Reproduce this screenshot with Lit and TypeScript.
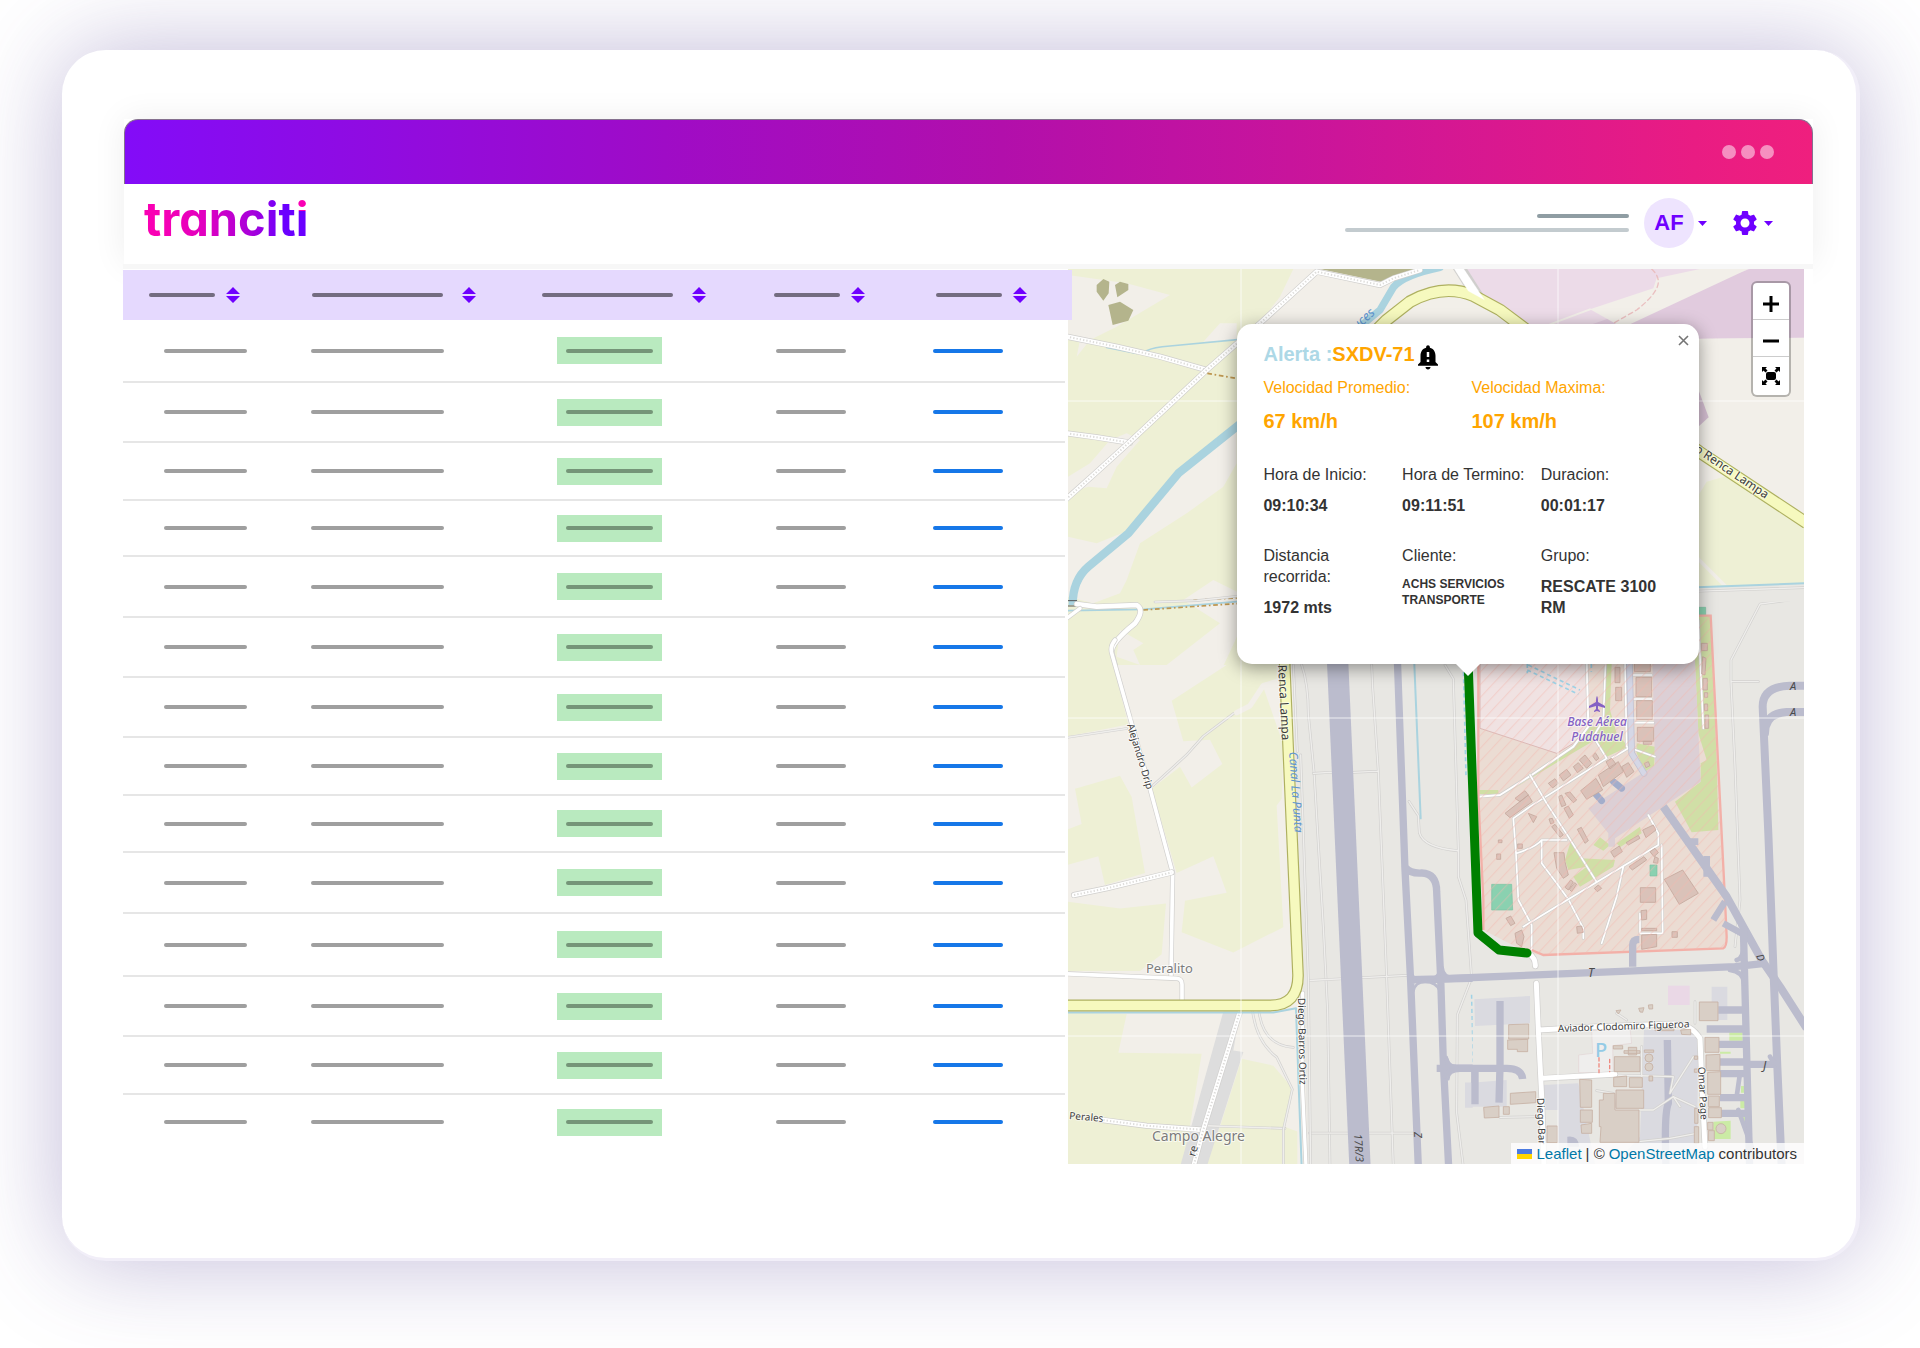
import { LitElement, html, css, svg } from "lit";
import { customElement } from "lit/decorators.js";

/* Height of each body row of the trips table. */
const ROWS = [62, 60, 58, 56, 61, 60, 60, 58, 57, 61, 63, 60, 58, 55];
const COLUMNS = ["a", "b", "c", "d", "e"];

const label = (x: number, y: number, angle: number, size: number, text: string, cls = "road") =>
  svg`<text class=${cls} x=${x} y=${y} font-size=${size} transform="rotate(${angle} ${x} ${y})">${text}</text>`;

/* Draws the street map: regional groups, then grid, route and labels. */
@customElement("street-map")
export class StreetMap extends LitElement {
  static styles = css`
    :host { display: block; position: absolute; inset: 0; overflow: hidden; background: #f2efe9; }
    svg { display: block; width: 100%; height: 100%; }
    .line { fill: none; stroke-linejoin: round; stroke-linecap: round; }
    .butt { stroke-linecap: butt; }
    .field { fill: #eef0d5; }
    .bare { fill: #f2efe9; }
    .olive { fill: #b4b48c; }
    .river { stroke: #aad3df; }
    .ground { fill: #e8e7e3; }
    .case { stroke: #d0cfcd; }
    .street { stroke: #ffffff; }
    .track { stroke: #dddcda; stroke-dasharray: 4 6; }
    .thin { stroke: #d2d1cf; stroke-width: 8; }
    .thinfill { stroke: #efeeec; stroke-width: 4; }
    .main { stroke: #aeb060; }
    .mainfill { stroke: #f6f9be; }
    .brown { stroke: #bd9650; stroke-width: 5; stroke-dasharray: 14 8 5 8; }
    .stream { stroke: #9ed2e6; stroke-width: 5; stroke-dasharray: 12 9; }
    .strip { fill: #bbbccd; }
    .taxi { stroke: #bbbccd; }
    .apron { fill: #dadae0; }
    .base { fill: #ebdcd3; }
    .pasture { fill: #f0e2e2; }
    .grass { fill: #d0dfa6; }
    .pitch { fill: #8ad1b0; stroke: #7cc3a3; stroke-width: 2; }
    .house { fill: #dac2b9; stroke: #c5a79c; stroke-width: 2.5; }
    .depot { fill: #d9cfc6; stroke: #c6b1a4; stroke-width: 2.5; }
    .grid { stroke: #ffffff; stroke-opacity: .75; stroke-width: 1; }
    .route { stroke: #008000; stroke-width: 9; }
    text { font-family: "Noto Sans", sans-serif; paint-order: stroke; stroke-linejoin: round; }
    .road { fill: #3d3d3d; stroke: rgba(255,255,255,.55); stroke-width: 2px; }
    .place { fill: #7c7c7c; stroke: rgba(255,255,255,.7); stroke-width: 2px; }
    .water { fill: #5f95cf; font-style: italic; }
    .air { fill: #8461c4; font-style: italic; font-weight: 500; text-anchor: middle; stroke: rgba(255,255,255,.6); stroke-width: 2px; }
    .gate { fill: #4a4a4a; font-style: italic; }
    .park { fill: #94cbe6; font-weight: 500; }
    .plane { fill: #8461c4; }
  `;

  private both(d: string, width: number) {
    return svg`<path class="line case" stroke-width=${width + 4} d=${d}/><path class="line street" stroke-width=${width} d=${d}/>`;
  }

  private thin(d: string) {
    return svg`<path class="line thin" d=${d}/><path class="line thinfill" d=${d}/>`;
  }

  private rough(d: string) {
    return svg`${this.both(d, 14)}<path class="line butt track" stroke-width="6" d=${d}/>`;
  }

  private northWest() {
    return svg`<g transform="translate(1060 260) scale(.33333)">
      <path class="field" d="M24 27H1320V1270H24Z"/>
      <path class="bare" d="M24 45 200 70 330 105 170 200 90 240 50 290 60 240 24 225ZM700 27H1500V200H590L660 110ZM430 245 480 190H530V240ZM90 610 150 540 200 520 240 540 170 620 140 685 85 680 24 700V650ZM24 830 110 850 210 810 350 640 530 490V610L490 680 380 760 240 850 200 960 180 1000 100 1030 24 1010ZM370 1020 460 960 540 1000V1110L480 1240 440 1270H250L480 1090ZM180 1110 250 1150 220 1170 240 1215 170 1190Z"/>
      <path class="olive" d="M110 75 130 57 148 65 146 100 130 122 110 95ZM165 75 180 65 205 72 205 90 172 112ZM145 135 180 125 220 150 205 182 158 195ZM780 27H1070L985 70Z"/>
      <path class="line butt river" stroke-width="25" d="M38 1035Q38 960 85 920L205 820 355 640 540 492"/>
      <path class="line river" stroke-width="22" d="M1140 22Q1030 45 1000 82L960 150 900 200"/>
      <path class="line river" stroke-width="5" d="M260 272Q280 262 330 258L540 238M24 1052 250 1048 540 1024M140 262 230 280"/>
      ${this.rough("M20 230 170 260 300 290 440 330")}
      ${this.rough("M20 520 110 532 210 548")}
      ${this.rough("M10 725 100 645 210 545 440 330 600 190 770 35 960 75 1000 55 1080 30")}
      <path class="line butt brown" d="M442 340 540 357M250 1050 540 1030M400 1021 540 1013"/>
      ${this.thin("M285 1026 410 1022 540 1008")}
      <path class="line" stroke="#555" stroke-width="3" d="M24 1022H50M24 1038H50"/>
      ${this.both("M50 1032 110 1040 230 1035Q255 1050 225 1090 150 1150 155 1180L180 1275", 14)}
      ${this.both("M20 1075 60 1045", 10)}
    </g>`;
  }

  private northEast() {
    return svg`<g transform="translate(1300 265) scale(.33333)">
      <path fill="#ecdbe8" d="M490 12H1512V220L640 190 540 90Z"/>
      <path fill="#e1cbde" d="M1350 12H1512V218L1150 222 870 180Z"/>
      <path class="bare" d="M1070 40 1200 12H1345L990 178H950L870 133 1060 70ZM1150 222 1512 218V700H1150Z"/>
      <path class="line" stroke="#f2efe9" stroke-width="6" d="M750 178 870 133"/>
      <path class="line" stroke="#eabfc0" stroke-width="4" stroke-dasharray="14 10" d="M1055 12Q1085 40 1070 70T1010 135L940 175"/>
      <path fill="#d5bfd2" d="M1190 360 1226 457 1190 490Z"/>
      <path class="field" d="M1190 700 1220 650 1290 630 1512 780V955L1190 967Z"/>
      <path class="bare" d="M1190 870 1280 960H1265L1190 885Z"/>
      <path class="ground" d="M1150 967 1512 955V1010H1150Z"/>
      <path class="line river" stroke-width="6" d="M1150 968 1512 955"/>
      ${this.thin("M1150 980 1512 968")}
      <path class="line butt case" stroke-width="36" d="M474 2 535 98"/>
      <path class="line main" stroke-width="38" d="M190 235 260 165 330 110Q430 55 520 92L600 135 700 210"/>
      <path class="line mainfill" stroke-width="31" d="M190 235 260 165 330 110Q430 55 520 92L600 135 700 210"/>
      <path class="street" d="M462 10H490L553 104 505 78Z" fill="#ffffff"/>
      <path class="line butt main" stroke-width="38" d="M1150 525 1197 560 1520 774"/>
      <path class="line butt mainfill" stroke-width="31" d="M1150 525 1197 560 1520 774"/>
    </g>`;
  }

  private southWest() {
    return svg`<g transform="translate(1060 640) scale(.33333 .3378)">
      <path class="bare" d="M24 74H720V1560H24Z"/>
      <path class="field" d="M24 0H155L160 74 205 250 24 285ZM335 180 500 74H650V130L610 140 670 310 665 470 650 490 670 850 520 925 365 865 375 772 500 748 460 640 350 690 275 440 360 375 395 437 487 367 450 295 370 300ZM45 440 180 402 215 465 255 690 135 725 115 640 24 665V560L65 545ZM24 775 180 795 318 780 305 930 240 980H24ZM24 1102 200 1107 175 1222 425 1225 370 1560H24ZM545 1240 640 1260 700 1330 672 1440 712 1455V1560H430L480 1440Z"/>
      <path fill="#dddddd" d="M490 1100H540L520 1215 550 1220 440 1560H360Z"/>
      <path class="ground" d="M693 0H1290V1560H745L728 1040Z"/>
      ${this.thin("M24 288 200 262")}
      ${this.thin("M280 430 380 340 430 285 520 218")}
      <path class="line" stroke="#f2efe9" stroke-width="16" d="M530 215 570 195 610 135 680 115"/>
      ${this.thin("M440 1438 675 1446")}
      ${this.thin("M578 1100Q590 1190 650 1235L697 1330 670 1450V1560")}
      ${this.thin("M597 1100Q610 1200 700 1206")}
      ${this.thin("M700 74 712 330M725 74Q745 130 745 220L762 390 790 850 803 1100 810 1560")}
      ${this.thin("M935 74 938 140 955 390 980 1000 1000 1560M760 395 840 390M880 392 955 388M745 1008 1040 993M748 1460 1060 1460")}
      ${this.thin("M722 340 745 1000 752 1560M1155 74 1180 115 1195 620 1195 700 1218 770 1235 1000 1192 1110 1190 1400 1210 1560M1047 478 1075 520 1078 570Q1090 615 1195 624")}
      <path class="strip" d="M798 0H862L932 1560H868Z"/>
      <path class="apron" d="M1245 1060H1290V1145H1245ZM1215 1310H1290V1385H1215Z"/>
      <path class="line taxi" stroke-width="22" d="M1010 0 1035 680 1052 1010 1075 1560M1035 672Q1050 692 1085 690 1130 692 1130 745L1142 1000 1150 1250 1166 1560M1052 1006 1290 1000M1158 1268H1290M1245 1268V1370"/>
      <path class="line taxi" stroke-width="8" d="M1045 985Q1065 1005 1095 1006 1125 1005 1138 985M1060 1040Q1065 1012 1095 1012 1130 1012 1140 1040M1148 970Q1150 1000 1185 1000M1160 1235Q1165 1262 1190 1262M1165 1300Q1165 1275 1200 1275"/>
      <path class="line river" stroke-width="6" d="M1060 0 1082 528"/>
      <path class="line butt stream" d="M1210 74 1218 400M1250 890 1255 1050M1235 1050 1240 1250M1246 1375 1252 1560"/>
      ${this.both("M165 0Q148 20 156 42L210 230 270 440 338 690 333 995", 11)}
      ${this.both("M20 988 350 1002Q366 1003 366 1020V1075", 11)}
      ${this.rough("M42 755 140 735 335 688")}
      ${this.rough("M120 1420 260 1438 430 1450")}
      ${this.rough("M540 1100 430 1450 400 1560")}
      <path class="line river" stroke-width="6" d="M20 1103H640L708 1090 715 1290 725 1560"/>
      ${this.both("M728 1045 726 1290 738 1560", 10)}
      <path class="line main" stroke-width="35" d="M671 0 685 330 714 990Q716 1082 630 1082H10"/>
      <path class="line mainfill" stroke-width="28" d="M671 0 685 330 714 990Q716 1082 630 1082H10"/>
    </g>`;
  }

  private airbase() {
    return svg`<g transform="translate(1440 600) scale(.33333)">
      <path class="ground" d="M98 0H1100V1700H98Z"/>
      ${this.thin("M1050 0 960 12 873 180V245H955M873 245 885 500 900 900 885 1040")}
      <path class="base" d="M115 180V590L130 900V990L265 1060 310 1065 850 1045 860 1010 855 900 812 45H740V180Z"/>
      <path class="pasture" stroke="#dcb9b6" stroke-width="3" d="M120 180H440L445 380 400 430 350 460 120 385Z"/>
      <path class="grass" d="M740 45H812L830 480 835 690 755 697 705 605 782 545V490L800 480 775 400 765 192ZM497 192H515L510 330 530 400 565 440 500 470 465 420 405 455 280 530 190 585 270 535 390 450 440 380 490 380ZM590 430 645 440 642 510 615 515 590 460ZM375 780 395 715 420 775 525 780 520 800 420 860 400 830 440 800 385 810ZM460 735 480 712 510 735 490 752ZM530 730 600 680 605 700 540 742ZM118 570H175V582H118Z"/>
      <path fill="#dccfd5" d="M637 180H765L782 545 525 715V740H505V700L445 625 645 495Z"/>
      <path class="line" stroke="#a3adcb" stroke-width="20" d="M465 580 485 602M520 545 545 565"/>
      ${this.both("M440 180 445 380 400 440 275 525 180 585 115 590", 6)}
      ${this.both("M497 180 490 360 460 410 500 475M500 475 270 620 220 655 228 760 235 900 275 975V1060M230 760Q290 740 305 720H380M305 720V790L350 850 385 898 430 985V1015", 5)}
      ${this.both("M270 525 320 610 385 710 468 843M250 980 385 898 655 735M655 735V700L625 645M665 735 668 1000H600V940M550 800 530 890 485 1030M775 60 790 385", 5)}
      ${this.both("M555 180 560 440 645 470M515 475 565 445M580 225H635M580 297H635M580 368H640", 5)}
      <path class="line" stroke="#c2c3d3" stroke-width="20" d="M568 180 575 460 612 520"/>
      <path class="line" stroke="#d5d7e6" stroke-width="15" d="M568 180 575 460 612 520"/>
      <path class="house" d="M583 180H631V215H583ZM588 232H635V290H588ZM590 302H637V358H590ZM592 382H641V424H592ZM610 424H635V433H610ZM525 202H540V248H525ZM527 262H545V302H527ZM475 525 535 485 550 515 490 560ZM422 572 468 535 488 570 440 598ZM498 485 515 475 528 492 510 507ZM545 500 565 488 582 515 560 532ZM400 500 415 488 430 505 412 518ZM418 480 435 465 455 490 440 505ZM458 468 466 458 477 475 468 482ZM358 525 380 508 393 525 370 543ZM325 550 345 536 355 550 338 564ZM195 640 265 585 277 605 210 653ZM225 595 255 572 265 585 240 605ZM355 590 365 585 378 615 365 620ZM372 625 385 618 400 645 388 655ZM375 580 390 576 410 600 400 608ZM335 680 345 673 370 705 360 712ZM412 688 424 682 445 722 435 730ZM327 657 337 655 342 668 332 672ZM558 728 595 706 600 715 565 735ZM608 690 640 675 648 690 618 713ZM512 755 538 738 547 755 522 772ZM567 800 612 770 620 780 577 810ZM630 755 645 745 655 758 642 770ZM673 838 728 810 775 880 718 913ZM601 863H647V907H601ZM342 758H372L375 785 385 825 370 835 350 805ZM375 862 392 840 400 846 385 870ZM388 868 404 848 410 853 395 875ZM463 865 475 855 485 865 472 875ZM605 1005 650 1003V1040L605 1048ZM603 932 620 930V958L605 960ZM605 985H650V992H605ZM696 995H712V1012H696ZM410 980 425 978 430 997 412 1000ZM198 955 212 948 225 970 212 977ZM225 1000 245 990 252 1010 245 1040 230 1030ZM233 732H247V745H233ZM170 762H182V778H170ZM175 720H186V728H175ZM613 490 625 485 630 497 618 503ZM645 770 655 775 653 790 640 788ZM265 640 290 650 280 668ZM784 130H802V152H784ZM788 170 798 175 795 225 785 222ZM789 235H802V270H789ZM793 312H803V332H793ZM795 345H806V385H795ZM793 278H803V292H793Z"/>
      <path class="pitch" d="M155 853H215L218 930H155ZM630 795H651V828H630ZM770 22H797V45H770Z"/>
      <path fill="none" stroke="#f3b0a8" stroke-width="7" d="M115 180V590L130 900V990M275 1050 310 1065 850 1045Q860 1040 860 1010L855 900 812 47H740"/>
      <path fill="url(#hatch)" d="M115 180V590L130 900V990L265 1060 310 1065 850 1045 860 1010 855 900 812 45H740V180Z"/>
      <path class="line butt stream" d="M265 195 420 270M262 210 415 283M262 192V220M454 192V215"/>
      <path class="line butt taxi" stroke-width="24" d="M670 620 860 890 965 1080 1020 1160 1100 1285"/>
      <path class="line butt taxi" stroke-width="20" d="M735 725H775M800 768V830M820 960 855 905M850 970 905 1000"/>
      <path class="line taxi" stroke-width="24" d="M1110 257H1050Q968 260 968 320L985 700 1000 1100 1012 1400 1025 1700M1110 336H1040Q975 340 975 400"/>
    </g>`;
  }

  private terminal() {
    return svg`<g transform="translate(1440 880) scale(.33333)">
      <path class="apron" d="M103 358 270 348V430L105 438ZM75 610 200 600V680H75ZM310 615 415 610 475 900H355V690H310ZM612 450H775L770 900H480L600 770ZM815 320H862V420H815Z"/>
      <path fill="#efeeed" stroke="#e2d5d5" stroke-width="2" d="M455 452 570 445 575 490 518 497 520 578H416V525L458 520Z"/>
      <path fill="#ead8e6" d="M684 317H749V375H684Z"/>
      <path fill="#cbeba5" d="M868 457H908V482H868ZM840 515H872V521H840ZM903 618H915V638H903ZM901 660H916V685H901ZM905 710 920 708V735ZM820 725 872 722V777H820Z"/>
      <path class="line taxi butt" stroke-width="22" d="M-10 297 400 280 885 260 975 250M578 260V195Q578 178 598 178M910 140 918 450 930 900M180 363V560L177 668M-10 565H200Q245 565 248 597M105 565V673M682 480 685 670Q672 700 678 860M835 390H910M800 447H920M835 493H925M840 546H925M840 581H925M840 653H930M840 700H925M930 553H1010"/>
      <path class="line taxi" stroke-width="14" d="M870 270Q910 275 912 310M890 240Q910 235 910 200M895 690 920 760 935 800M900 580 890 650M20 540Q25 562 50 562M15 590Q22 570 50 568M990 530Q1000 550 1015 553"/>
      <path class="strip" d="M382 770Q415 765 418 800H382Z"/>
      ${this.thin("M300 595 520 585 700 590 690 640 760 530M470 632 520 640 525 690H640L700 650 765 680M180 712 300 710M690 775 770 760M595 785 690 775M605 500V590M765 365V430M530 400 560 420M700 650 720 680")}
      ${this.both("M266 220Q287 235 286 258M289 310 295 450 305 650 312 860M297 450 470 440 700 432Q750 430 780 475L785 600 795 800M305 595 525 583", 15)}
      <path class="line" stroke="#ef8a80" stroke-width="4" stroke-dasharray="10 8" d="M477 533V578M509 538V575"/>
      <path class="depot" d="M206 434 266 432V477H206ZM203 480 263 478V515H232V508H203ZM211 640 287 635V668L211 673ZM131 682 177 678V712L133 714ZM190 680H208V703H190ZM321 738H352V788H321ZM419 598 455 600V682H421ZM421 690H457V727H421ZM423 735 455 730V760H425ZM523 530H600V575H523ZM521 592 560 588V620H521ZM568 593H607V622H568ZM528 630H611V685H528ZM490 640H525V690H597V787H480L483 740H478V660H490ZM778 366H834V422H778ZM795 472H837V517H795ZM798 525 840 523V572H798ZM803 577 842 575V643H803ZM805 648H838V680H805ZM806 683H844V713H806ZM803 727H819V750H803ZM805 752H823V782H805ZM763 740H776V790H763ZM764 685H774V730H764ZM520 497H548V507H520ZM552 512H600V520H552ZM565 502H590V525H565ZM613 510H641V517H613ZM627 588H638V603H627ZM596 385 612 383 608 397 600 396ZM625 375 638 374V387H627ZM528 392 543 390 535 402ZM645 446H702V452H645ZM722 450 752 448V465L725 463ZM763 528H773V538H763ZM763 567H773V577H763Z"/>
      <circle class="depot" cx="627" cy="534" r="12"/><circle class="depot" cx="627" cy="561" r="12"/><circle class="depot" cx="843" cy="746" r="15"/>
    </g>`;
  }

  render() {
    return html`<svg viewBox="1068 269 736 895" preserveAspectRatio="xMinYMin slice" role="img">
      <defs>
        <pattern id="hatch" width="26" height="26" patternUnits="userSpaceOnUse" patternTransform="rotate(43)">
          <path d="M2 0V26" stroke="#f3b5ae" stroke-opacity=".5" stroke-width="3"/>
        </pattern>
      </defs>
      ${this.northWest()} ${this.southWest()} ${this.airbase()} ${this.northEast()} ${this.terminal()}
      <path class="grid" d="M1241 269V1164M1558 269V1164M1068 401H1804M1068 718H1804M1068 1036H1804"/>
      <path class="line route" d="M1468 660 1478 933 1499 950 1527 953"/>
      ${label(1146, 973, 0, 13, "Peralito", "place")}
      ${label(1152, 1141, 0, 14, "Campo Alegre", "place")}
      ${label(1069, 1119, 5, 10, "Perales")}
      ${label(1127, 725, 73, 10, "Alejandro Drip")}
      ${label(1278, 665, 87, 12, "Renca Lampa")}
      ${label(1289, 752, 86, 12, "Canal La Punta", "water")}
      ${label(1298, 998, 89, 10, "Diego Barros Ortiz")}
      ${label(1354, 1134, 86, 11, "17R/3", "gate")}
      ${label(1414, 1132, 88, 11, "Z", "gate")}
      ${label(1195, 1157, -73, 11, "re")}
      ${label(1357, 331, -43, 13, "uces", "water")}
      ${label(1694, 451, 34, 12, "o Renca Lampa")}
      ${label(1597, 726, 0, 12, "Base Aérea", "air")}
      ${label(1597, 741, 0, 12, "Pudahuel", "air")}
      ${label(1790, 690, 0, 11, "A", "gate")}
      ${label(1790, 716, 0, 11, "A", "gate")}
      ${label(1588, 977, 0, 12, "T", "gate")}
      ${label(1756, 956, 65, 10, "D", "gate")}
      ${label(1763, 1070, 0, 12, "J", "gate")}
      ${label(1558, 1032, -2, 10, "Aviador Clodomiro Figueroa")}
      ${label(1595, 1057, 0, 20, "P", "park")}
      ${label(1698, 1067, 87, 10, "Omar Page")}
      ${label(1537, 1098, 88, 10, "Diego Bar")}
      <path class="plane" d="M1597 696Q1598 697 1598 702L1605 706V708L1598 706V709L1600 711V712L1597 711 1594 712V711L1596 709V706L1589 708V706L1596 702Q1596 697 1597 696Z"/>
    </svg>`;
  }
}

@customElement("app-root")
export class AppRoot extends LitElement {
  static styles = css`
    :host {
      display: block;
      font-family: "Liberation Sans", Arial, sans-serif;
      color: #333333;
      background: #ffffff;
      overflow: hidden;
    }
    * { box-sizing: border-box; }
    button { font: inherit; border: 0; background: none; padding: 0; margin: 0; cursor: pointer; color: inherit; }
    a { text-decoration: none; }
    .page { padding: 50px 60px 87px 62px; }
    .device {
      padding: 69px 43px 94px 61px;
      border-right: 4px solid #f1eef8;
      border-bottom: 3px solid #f1eef8;
      border-radius: 44px;
      background: #ffffff;
      background-clip: padding-box;
      box-shadow: 0 0 96px rgba(86, 66, 150, 0.36);
    }
    .window { box-shadow: 0 0 32px rgba(0, 0, 0, 0.07); margin-left: 1px; }
    .titlebar {
      display: flex; justify-content: flex-end; align-items: center; gap: 5px;
      height: 65px; padding-right: 38px;
      border-radius: 14px 14px 0 0;
      border: 1px solid #85708f; border-bottom: 0;
      background: linear-gradient(90deg, #830cf8 0%, #9f0cc6 32%, #b20fab 52%, #c8149c 69%, #e91c83 93%, #ef1f7e 100%);
    }
    .dot { width: 14px; height: 14px; border-radius: 50%; background: rgba(255, 255, 255, 0.5); }
    .header {
      display: flex; align-items: center; justify-content: space-between;
      height: 80px; padding: 0 40px 2px 20px; background: #ffffff;
    }
    .logo {
      font-family: Inter, "Open Sans", sans-serif; font-feature-settings: "cv11"; font-weight: 700;
      font-size: 47px; line-height: 56px; padding-bottom: 8px;
      color: transparent; display: flex;
    }
    .word { background: linear-gradient(90deg, #f900b4 10%, #e000c0 40%, #a500dc 72%, #6a00ff 92%); background-clip: text; -webkit-background-clip: text; }
    .last { background: linear-gradient(180deg, #f900b4 36%, #6a00ff 36%); background-clip: text; -webkit-background-clip: text; }
    .account { display: flex; align-items: center; color: #6f00ff; }
    .names { display: flex; flex-direction: column; align-items: flex-end; gap: 10px; margin-right: 15px; }
    .bar { display: block; height: 4px; border-radius: 2px; }
    .name { width: 92px; background: #8f9da3; }
    .company { width: 284px; background: #c3cbcf; }
    .menu { display: flex; align-items: center; gap: 4px; }
    .settings { margin-left: 23px; }
    .avatar {
      width: 50px; height: 50px; border-radius: 50%; background: #eee4fe;
      display: grid; place-items: center; font-weight: 700; font-size: 22px;
    }
    .icon { display: block; fill: currentColor; }
    .content {
      display: grid; grid-template-columns: minmax(0, 946fr) minmax(0, 736fr);
      padding: 5px 9px 0 0; background: linear-gradient(#f7f7f7 5px, #ffffff 5px);
    }
    .trips { position: relative; z-index: 1; padding: 1px 0 15px; margin-right: -4px; }
    table { width: 100%; border-collapse: collapse; table-layout: fixed; }
    .col-a { width: 17%; } .col-b { width: 24.2%; } .col-c { width: 24.4%; } .col-d { width: 17.1%; } .col-e { width: 16.5%; } .col-z { width: 0.8%; }
    th { height: 50px; padding: 0; background: #e5d9fe; }
    td { padding: 0; border-bottom: 2px solid #e6e6e6; }
    tr:last-child td, td.edge { border-bottom: 0; }
    .sort { display: flex; align-items: center; gap: 11px; padding-left: 28px; color: #6f00ff; }
    .sort .bar { width: 66px; background: #736c80; }
    .sort.a { padding-left: 26px; }
    .sort.b .bar, .sort.c .bar { width: 131px; }
    .sort.b, .sort.c { gap: 19px; }
    .value { width: 83px; margin-left: 41px; background: #9f9f9f; }
    .value.b { width: 133px; margin-left: 27px; }
    .value.d { width: 70px; margin-left: 30px; }
    .value.e { width: 70px; margin-left: 25px; background: #1677e8; }
    .chip { display: flex; align-items: center; width: 105px; height: 27px; padding: 0 9px; margin-left: 43px; background: #b9eabf; }
    .chip .bar { flex: 1; background: #759578; }
    .map { position: relative; min-height: 640px; }
    .popup {
      position: absolute; left: 169px; top: 55px; width: 462px;
      padding: 16px 20px 46px 26px; border-radius: 15px; background: #ffffff;
      box-shadow: 0 4px 18px rgba(0, 0, 0, 0.4); font-size: 16px; line-height: 21px;
    }
    .tip { position: absolute; left: 50%; bottom: -12px; width: 24px; height: 12px; margin-left: -12px; fill: #ffffff; }
    .close { position: absolute; right: 10px; top: 11px; color: #757575; }
    .title { display: flex; align-items: flex-start; height: 28px; margin: 0; font-size: 20px; line-height: 28px; color: #ffa500; }
    .tag { color: #add8e6; }
    .bell { color: #000000; margin: 2px 0 0 -2px; }
    dl, dd, dt { margin: 0; }
    .speeds { display: grid; grid-template-columns: 1fr 1fr; margin-top: 10px; color: #ffa500; line-height: 20px; }
    .speeds dd { margin-top: 11px; font-size: 20px; line-height: 24px; }
    dd { margin-top: 10px; font-weight: 700; }
    .facts { display: grid; grid-template-columns: repeat(3, 1fr); row-gap: 29px; margin-top: 31px; }
    .facts dt { white-space: nowrap; }
    .facts .wrap { white-space: normal; width: 100px; }
    .facts .small { font-size: 12px; line-height: 16px; }
    .zoom {
      position: absolute; right: 13px; top: 12px; display: flex; flex-direction: column;
      border: 2px solid rgba(0, 0, 0, 0.25); border-radius: 6px; background: #ffffff; background-clip: padding-box;
    }
    .zoom button { width: 36px; height: 37px; padding-top: 6px; display: grid; place-items: center; color: #000000; border-bottom: 1px solid #cccccc; }
    .zoom button:last-child { height: 38px; padding-top: 0; border-bottom: 0; }
    .credit {
      position: absolute; right: 0; bottom: 0; display: flex; align-items: center; gap: 4px;
      height: 21px; padding: 0 7px 0 6px; font-size: 15px; background: rgba(255, 255, 255, 0.8); white-space: nowrap;
    }
    .credit a { color: #0078a8; }
  `;

  private caret() {
    return html`<svg class="icon" width="9" height="5" viewBox="0 0 9 5"><path d="M0 0H9L4.500 5Z"/></svg>`;
  }

  private heading(key: string) {
    return html`<th><button class="sort ${key}" aria-label="Ordenar">
      <span class="bar"></span>
      <svg class="icon" width="14" height="16" viewBox="0 0 14 16"><path d="M7 0 14 7H0ZM0 9H14L7 16Z"/></svg>
    </button></th>`;
  }

  private cell(key: string) {
    return key === "c"
      ? html`<td><span class="chip"><span class="bar"></span></span></td>`
      : html`<td><span class="bar value ${key}"></span></td>`;
  }

  private fact(name: string, value: string, wrap = false, small = false) {
    return html`<div><dt class=${wrap ? "wrap" : ""}>${name}</dt><dd class=${small ? "small" : ""}>${value}</dd></div>`;
  }

  private popup() {
    return html`<section class="popup">
      <button class="close" aria-label="Cerrar"><svg class="icon" width="11" height="11" viewBox="0 0 11 11"><path d="M1 1 10 10M10 1 1 10" stroke="currentColor" stroke-width="1.600"/></svg></button>
      <h2 class="title"><span class="tag">Alerta :</span>SXDV-71
        <svg class="icon bell" width="30" height="30" viewBox="0 0 24 24"><path d="M18 16v-5c0-3.070-1.640-5.640-4.500-6.320V4c0-.830-.670-1.500-1.500-1.500s-1.500.670-1.500 1.500v.680C7.630 5.360 6 7.920 6 11v5l-2 2v1h16v-1l-2-2zm-5 0h-2v-2h2v2zm0-4h-2V8h2v4zm-1 10c1.100 0 2-.900 2-2h-4c0 1.100.890 2 2 2z"/></svg>
      </h2>
      <dl class="speeds">
        ${this.fact("Velocidad Promedio:", "67 km/h")} ${this.fact("Velocidad Maxima:", "107 km/h")}
      </dl>
      <dl class="facts">
        ${this.fact("Hora de Inicio:", "09:10:34")} ${this.fact("Hora de Termino:", "09:11:51")} ${this.fact("Duracion:", "00:01:17")}
        ${this.fact("Distancia recorrida:", "1972 mts", true)} ${this.fact("Cliente:", "ACHS SERVICIOS TRANSPORTE", false, true)} ${this.fact("Grupo:", "RESCATE 3100 RM")}
      </dl>
      <svg class="tip" viewBox="0 0 24 12"><path d="M0 0H24L12 12Z"/></svg>
    </section>`;
  }

  render() {
    return html`<div class="page"><main class="device">
      <div class="window">
        <div class="titlebar"><span class="dot"></span><span class="dot"></span><span class="dot"></span></div>
        <header class="header">
          <div class="logo"><span class="word">trancit</span><span class="last">i</span></div>
          <div class="account">
            <div class="names"><span class="bar name"></span><span class="bar company"></span></div>
            <button class="menu"><span class="avatar">AF</span>${this.caret()}</button>
            <button class="menu settings" aria-label="Ajustes">
              <svg class="icon" width="30" height="30" viewBox="0 0 24 24"><path d="M19.140 12.940c.040-.300.060-.610.060-.940 0-.320-.020-.640-.070-.940l2.030-1.580c.180-.140.230-.410.120-.610l-1.920-3.320c-.120-.220-.370-.290-.590-.220l-2.390.960c-.500-.380-1.030-.700-1.620-.940l-.360-2.540c-.040-.240-.240-.410-.480-.410h-3.840c-.240 0-.430.170-.470.410l-.360 2.540c-.590.240-1.130.570-1.620.940l-2.390-.960c-.220-.080-.470 0-.590.220L2.740 8.870c-.120.210-.080.470.120.610l2.030 1.580c-.050.300-.090.630-.090.940s.020.640.070.940l-2.030 1.580c-.180.140-.230.410-.120.610l1.920 3.320c.120.220.370.290.590.220l2.390-.960c.500.380 1.030.700 1.620.940l.360 2.540c.050.240.240.410.480.410h3.840c.240 0 .440-.170.470-.410l.360-2.540c.590-.240 1.130-.560 1.620-.940l2.390.960c.220.080.470 0 .590-.220l1.920-3.320c.120-.220.070-.470-.120-.610l-2.010-1.580zM12 15.600c-1.980 0-3.600-1.620-3.600-3.600s1.620-3.600 3.600-3.600 3.600 1.620 3.600 3.600-1.620 3.600-3.600 3.600z"/></svg>
              ${this.caret()}
            </button>
          </div>
        </header>
      </div>
      <div class="content">
        <div class="trips">
          <table>
            <colgroup>${COLUMNS.map((k) => html`<col class="col-${k}">`)}<col class="col-z"></colgroup>
            <thead><tr>${COLUMNS.map((k) => this.heading(k))}<th></th></tr></thead>
            <tbody>${ROWS.map((h) => html`<tr style="height:${h}px">${COLUMNS.map((k) => this.cell(k))}<td class="edge"></td></tr>`)}</tbody>
          </table>
        </div>
        <div class="map">
          <street-map></street-map>
          ${this.popup()}
          <div class="zoom">
            <button aria-label="Acercar"><svg class="icon" width="16" height="16" viewBox="0 0 16 16"><path d="M6.500 0H9.500V6.500H16V9.500H9.500V16H6.500V9.500H0V6.500H6.500Z"/></svg></button>
            <button aria-label="Alejar"><svg class="icon" width="16" height="16" viewBox="0 0 16 16"><path d="M0 6.500H16V9.500H0Z"/></svg></button>
            <button aria-label="Pantalla completa"><svg class="icon" width="18" height="18" viewBox="0 0 18 18"><path d="M0 0H5L3.500 1.500 5.500 3.500 3.500 5.500 1.500 3.500 0 5ZM18 0V5L16.500 3.500 14.500 5.500 12.500 3.500 14.500 1.500 13 0ZM0 18V13L1.500 14.500 3.500 12.500 5.500 14.500 3.500 16.500 5 18ZM18 18H13L14.500 16.500 12.500 14.500 14.500 12.500 16.500 14.500 18 13ZM6 5H12Q14 5 14 7V11Q14 13 12 13H6Q4 13 4 11V7Q4 5 6 5Z"/></svg></button>
          </div>
          <div class="credit">
            <a href="#leaflet"><svg width="15" height="10" viewBox="0 0 15 10"><path fill="#4c7be1" d="M0 0H15V5H0Z"/><path fill="#ffd500" d="M0 5H15V10H0Z"/></svg> Leaflet</a>
            <span>| ©</span><a href="#osm">OpenStreetMap</a><span>contributors</span>
          </div>
        </div>
      </div>
    </main></div>`;
  }
}
